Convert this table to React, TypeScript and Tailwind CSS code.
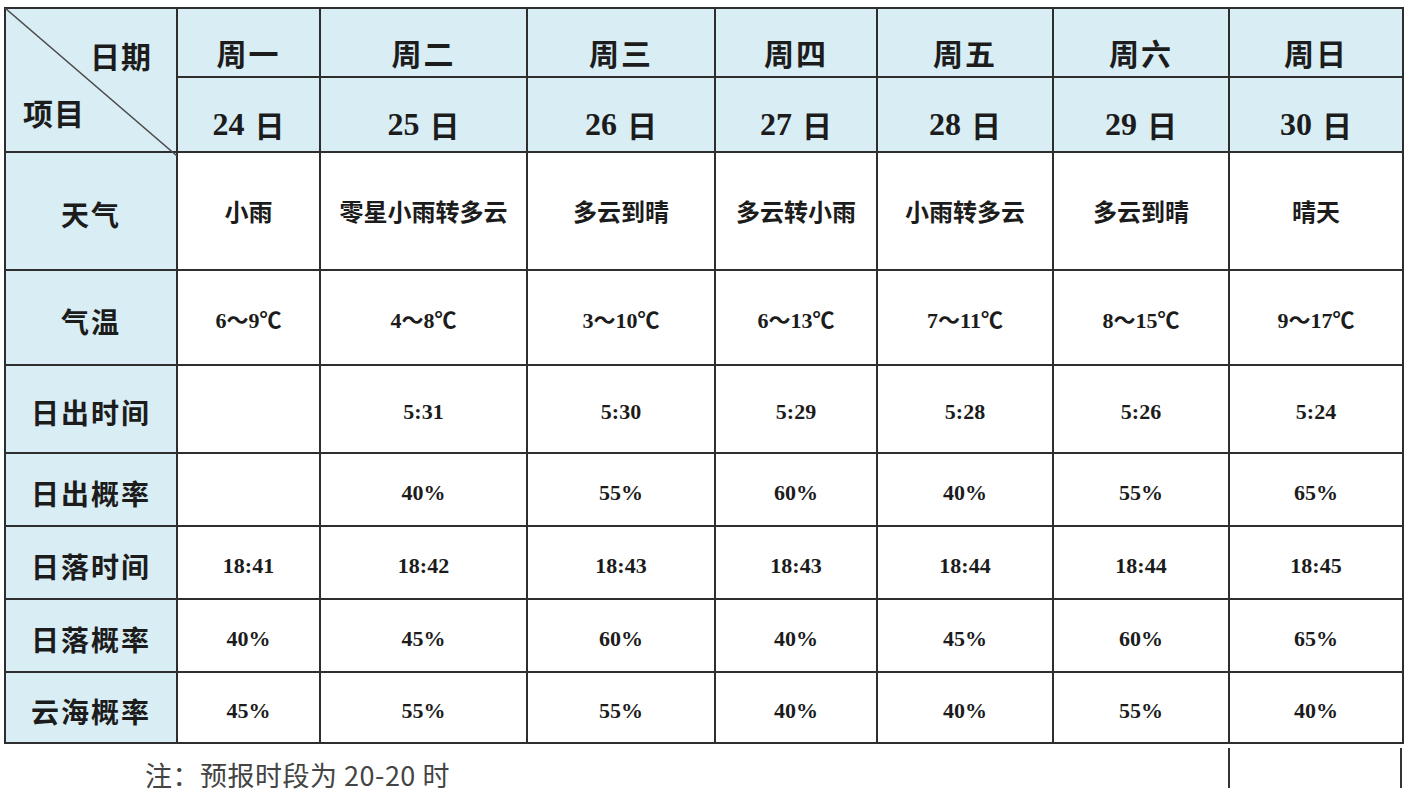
import React from 'react';

const days = [
  { week: '周一', date: '24' },
  { week: '周二', date: '25' },
  { week: '周三', date: '26' },
  { week: '周四', date: '27' },
  { week: '周五', date: '28' },
  { week: '周六', date: '29' },
  { week: '周日', date: '30' },
];

const rows: { label: string; values: string[]; cjk?: boolean; h: string }[] = [
  { label: '天气', cjk: true, h: 'h-[116px]', values: ['小雨', '零星小雨转多云', '多云到晴', '多云转小雨', '小雨转多云', '多云到晴', '晴天'] },
  { label: '气温', h: 'h-[93px]', values: ['6～9℃', '4～8℃', '3～10℃', '6～13℃', '7～11℃', '8～15℃', '9～17℃'] },
  { label: '日出时间', h: 'h-[86px]', values: ['', '5:31', '5:30', '5:29', '5:28', '5:26', '5:24'] },
  { label: '日出概率', h: 'h-[71px]', values: ['', '40%', '55%', '60%', '40%', '55%', '65%'] },
  { label: '日落时间', h: 'h-[71px]', values: ['18:41', '18:42', '18:43', '18:43', '18:44', '18:44', '18:45'] },
  { label: '日落概率', h: 'h-[71px]', values: ['40%', '45%', '60%', '40%', '45%', '60%', '65%'] },
  { label: '云海概率', h: 'h-[69px]', values: ['45%', '55%', '55%', '40%', '40%', '55%', '40%'] },
];

const App: React.FC = () => {
  return (
    <div className="w-[1407px] h-[800px] bg-white pl-[4px] pt-[7px] text-[#1c1c1c] font-['Noto_Sans_CJK_SC',sans-serif]">
      {/* 表格 */}
      <div className="w-[1400px] grid grid-cols-[170px_141px_205px_186px_160px_174px_174px_172px] gap-[2px] p-[2px] bg-[#2e2e2e]">
        {/* 左上角斜线格 */}
        <div className="row-span-2 relative bg-[#d9edf4]">
          <svg className="absolute -inset-[1px] w-[172px] h-[148px]" viewBox="0 0 172 148" preserveAspectRatio="none">
            <line x1="0" y1="0" x2="172" y2="148" stroke="#4a4a4a" strokeWidth="1.4" />
          </svg>
          <span className="absolute left-[84px] top-[31px] text-[30px] leading-none font-bold tracking-[1px]">日期</span>
          <span className="absolute left-[17px] top-[88px] text-[30px] leading-none font-bold tracking-[1px]">项目</span>
        </div>
        {days.map((d) => (
          <div key={d.week} className="h-[67px] bg-[#d9edf4] flex items-center justify-center pt-[18px] text-[30px] leading-none font-bold tracking-[2px]">
            {d.week}
          </div>
        ))}
        {days.map((d) => (
          <div key={d.date} className="h-[73px] bg-[#d9edf4] flex items-center justify-center pt-[19px] text-[30px] leading-none">
            <span className="font-['Liberation_Serif',serif] font-semibold text-[32px]">{d.date}</span>
            <span className="ml-[10px] font-bold">日</span>
          </div>
        ))}

        {rows.map((r) => (
          <React.Fragment key={r.label}>
            <div className={`${r.h} bg-[#d9edf4] flex items-center justify-center pt-[6px] text-[28px] leading-none font-bold tracking-[2px]`}>
              {r.label}
            </div>
            {r.values.map((v, i) => (
              <div
                key={i}
                className={
                  r.cjk
                    ? `${r.h} bg-white flex items-center justify-center text-[24px] leading-none font-bold`
                    : `${r.h} bg-white flex items-center justify-center pt-[6px] text-[22px] leading-none font-bold font-['Liberation_Serif','Noto_Sans_CJK_SC',serif]`
                }
              >
                {v}
              </div>
            ))}
          </React.Fragment>
        ))}
      </div>

      {/* 注释 */}
      <div className="w-[1400px] grid grid-cols-[1224px_174px]">
        <div className="pl-[141px] pt-[14px] text-[27px] leading-[34px] tracking-[0.5px] text-[#444]">
          注：预报时段为 20-20 时
        </div>
        <div className="mt-[4px] h-[40px] border-l-2 border-r-2 border-[#333]" />
      </div>
    </div>
  );
};

export default App;
